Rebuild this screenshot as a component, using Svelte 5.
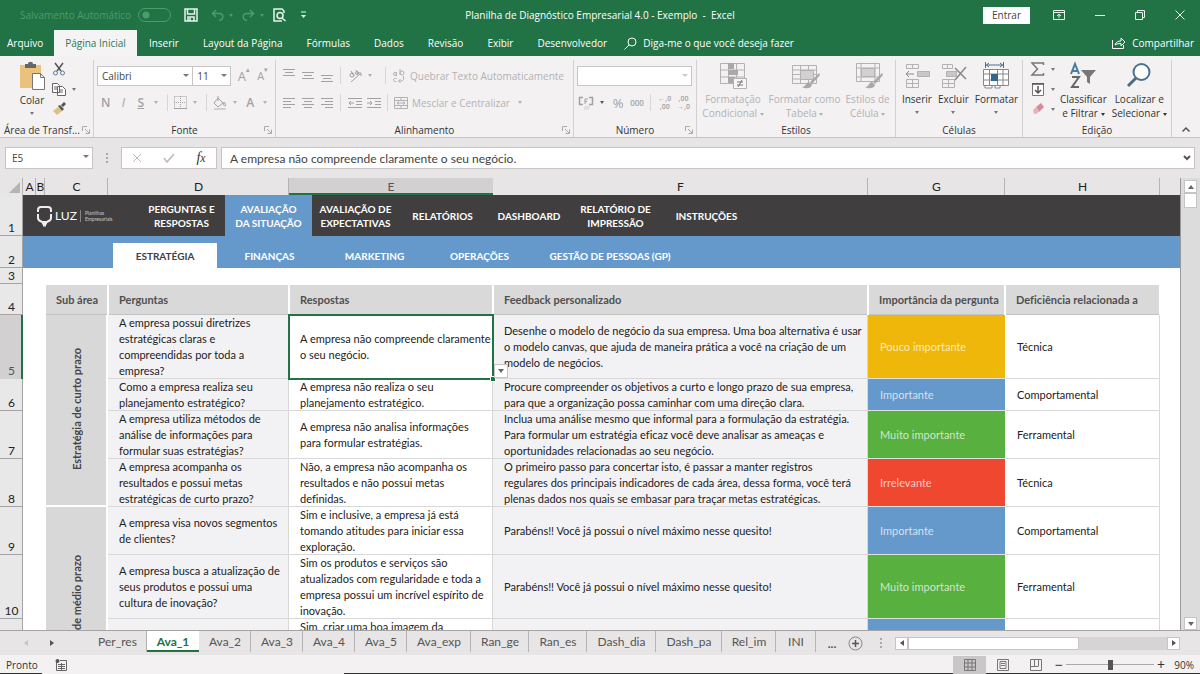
<script lang="ts">
  type Row = {
    n?: number
    height: number
    pergunta: string
    resposta: string
    feedback: string
    nivel: string
    cor: string
    relacao: string
    area?: string
    span?: number
  }

  const menu = ['Inserir', 'Layout da Página', 'Fórmulas', 'Dados', 'Revisão', 'Exibir', 'Desenvolvedor']
  const columns = ['A', 'B', 'C', 'D', 'E', 'F', 'G', 'H', '']
  const secoes = [
    'PERGUNTAS E\nRESPOSTAS',
    'AVALIAÇÃO\nDA SITUAÇÃO',
    'AVALIAÇÃO DE\nEXPECTATIVAS',
    'RELATÓRIOS',
    'DASHBOARD',
    'RELATÓRIO DE\nIMPRESSÃO',
    'INSTRUÇÕES',
  ]
  const areas = ['ESTRATÉGIA', 'FINANÇAS', 'MARKETING', 'OPERAÇÕES', 'GESTÃO DE PESSOAS (GP)']
  const headers = ['Sub área', 'Perguntas', 'Respostas', 'Feedback personalizado', 'Importância da pergunta', 'Deficiência relacionada a']
  const sheets = ['Per_res', 'Ava_1', 'Ava_2', 'Ava_3', 'Ava_4', 'Ava_5', 'Ava_exp', 'Ran_ge', 'Ran_es', 'Dash_dia', 'Dash_pa', 'Rel_im', 'INI']

  const rows: Row[] = [
    {
      n: 5, height: 64, area: 'Estratégia de curto prazo', span: 4,
      pergunta: 'A empresa possui diretrizes\nestratégicas claras e\ncompreendidas por toda a\nempresa?',
      resposta: 'A empresa não compreende claramente\no seu negócio.',
      feedback: 'Desenhe o modelo de negócio da sua empresa. Uma boa alternativa é usar\no modelo canvas, que ajuda de maneira prática a você na criação de um\nmodelo de negócios.',
      nivel: 'Pouco importante', cor: 'yellow', relacao: 'Técnica',
    },
    {
      n: 6, height: 32,
      pergunta: 'Como a empresa realiza seu\nplanejamento estratégico?',
      resposta: 'A empresa não realiza o seu\nplanejamento estratégico.',
      feedback: 'Procure compreender os objetivos a curto e longo prazo de sua empresa,\npara que a organização possa caminhar com uma direção clara.',
      nivel: 'Importante', cor: 'blue', relacao: 'Comportamental',
    },
    {
      n: 7, height: 48,
      pergunta: 'A empresa utiliza métodos de\nanálise de informações para\nformular suas estratégias?',
      resposta: 'A empresa não analisa informações\npara formular estratégias.',
      feedback: 'Inclua uma análise mesmo que informal para a formulação da estratégia.\nPara formular um estratégia eficaz você deve analisar as ameaças e\noportunidades relacionadas ao seu negócio.',
      nivel: 'Muito importante', cor: 'green', relacao: 'Ferramental',
    },
    {
      n: 8, height: 48,
      pergunta: 'A empresa acompanha os\nresultados e possui metas\nestratégicas de curto prazo?',
      resposta: 'Não, a empresa não acompanha os\nresultados e não possui metas\ndefinidas.',
      feedback: 'O primeiro passo para concertar isto, é passar a manter registros\nregulares dos principais indicadores de cada área, dessa forma, você terá\nplenas dados nos quais se embasar para traçar metas estratégicas.',
      nivel: 'Irrelevante', cor: 'red', relacao: 'Técnica',
    },
    {
      n: 9, height: 48, area: 'Estratégia de médio prazo', span: 4,
      pergunta: 'A empresa visa novos segmentos\nde clientes?',
      resposta: 'Sim e inclusive, a empresa já está\ntomando atitudes para iniciar essa\nexploração.',
      feedback: 'Parabéns!! Você já possui o nível máximo nesse quesito!',
      nivel: 'Importante', cor: 'blue', relacao: 'Comportamental',
    },
    {
      n: 10, height: 64,
      pergunta: 'A empresa busca a atualização de\nseus produtos e possui uma\ncultura de inovação?',
      resposta: 'Sim os produtos e serviços são\natualizados com regularidade e toda a\nempresa possui um incrível espírito de\ninovação.',
      feedback: 'Parabéns!! Você já possui o nível máximo nesse quesito!',
      nivel: 'Muito importante', cor: 'green', relacao: 'Ferramental',
    },
    { height: 48, pergunta: '', resposta: 'Sim, criar uma boa imagem da', feedback: '', nivel: '', cor: 'blue', relacao: '' },
    { height: 66, pergunta: '', resposta: '', feedback: '', nivel: '', cor: 'green', relacao: '' },
  ]

  let section = $state(1)
  let area = $state(0)
  let sheet = $state(1)
  let autosave = $state(false)
  let formula = $state('A empresa não compreende claramente o seu negócio.')
  let zoom = $state(90)
</script>

{#snippet caret()}<i class="caret"></i>{/snippet}

{#snippet launcher()}
  <svg class="launcher" width="8" height="8" viewBox="0 0 8 8"><path d="M.5 5V.5H5M3 3l4 4M7.500 3.500v4h-4" /></svg>
{/snippet}

{#snippet lines(a: string)}
  <svg width="14" height="14" viewBox="0 0 14 14"><path d={a} /></svg>
{/snippet}

{#snippet brush()}
  <path class="fill-g" d="M28 11l-9 9 2 2 8-9zM18 20c-3 0-3 5-7 5 3 2 9 2 10-2z" />
{/snippet}

<div class="excel">
  <header class="title-bar">
    <div class="quick">
      <label class="autosave">
        Salvamento Automático
        <input type="checkbox" bind:checked={autosave} />
      </label>
      <button aria-label="Salvar">
        <svg width="14" height="14" viewBox="0 0 14 14"><path d="M1 1h12v12H1zM3.500 1v5h7V1M4 13V9h6v4M6 10v3" stroke-width="1.500" /></svg>
      </button>
      <button class="faded" aria-label="Desfazer">
        <svg width="13" height="13" viewBox="0 0 13 13"><path d="M5 1L1.500 4.500 5 8M2 4.500h6c5 0 5 6 0 7" stroke-width="1.500" /></svg>{@render caret()}
      </button>
      <button class="faded" aria-label="Refazer">
        <svg width="13" height="13" viewBox="0 0 13 13"><path d="M8 1l3.500 3.500L8 8M11 4.500H5c-5 0-5 6 0 7" stroke-width="1.500" /></svg>{@render caret()}
      </button>
      <button aria-label="Visualizar impressão">
        <svg width="14" height="14" viewBox="0 0 14 14"><path d="M11 5V3L9 1H1v12h8M12.500 13L9 10" stroke-width="1.500" /><circle cx="7" cy="7.500" r="3" stroke-width="1.500" /></svg>
      </button>
      <button aria-label="Personalizar barra">
        <svg width="7" height="8" viewBox="0 0 7 8"><path d="M1 1h5" /><path class="solid" d="M1 4h5L3.500 7z" /></svg>
      </button>
    </div>
    <h1>Planilha de Diagnóstico Empresarial 4.0 - Exemplo&nbsp; -&nbsp; Excel</h1>
    <div class="window">
      <button class="signin">Entrar</button>
      <button aria-label="Opções da faixa"><svg width="12" height="10" viewBox="0 0 12 10"><path d="M.5.500h11v9H.5zM.5 2.500h11M6 8V4M4 6l2-2 2 2" /></svg></button>
      <button aria-label="Minimizar"><svg width="10" height="10" viewBox="0 0 10 10"><path d="M0 5.500h10" /></svg></button>
      <button aria-label="Restaurar"><svg width="10" height="10" viewBox="0 0 10 10"><path d="M.5 2.500h7v7h-7zM2.500 2.500v-2h7v7h-2" /></svg></button>
      <button aria-label="Fechar"><svg width="10" height="10" viewBox="0 0 10 10"><path d="M.5.500l9 9M9.500.500l-9 9" /></svg></button>
    </div>
  </header>

  <nav class="menu">
    <button class="file">Arquivo</button>
    <button class="active">Página Inicial</button>
    {#each menu as item}
      <button>{item}</button>
    {/each}
    <button class="tell">
      <svg width="13" height="13" viewBox="0 0 13 13"><circle cx="8" cy="5" r="4" /><path d="M5 8L.5 12.500" /></svg>
      Diga-me o que você deseja fazer
    </button>
    <button class="share">
      <svg width="14" height="12" viewBox="0 0 14 12"><path d="M.5 3v8.500h11V8M3 8c1-3 3-4 6-4V1l4 4-4 4V6.500C6 6.500 4.500 7 3 8z" /></svg>
      Compartilhar
    </button>
  </nav>

  <section class="ribbon">
    <div class="group">
      <div class="body">
        <button class="big paste">
          <svg width="26" height="28" viewBox="0 0 26 28">
            <path fill="#ebc27c" stroke="none" d="M1 3h21v23H1z" /><path fill="#666" stroke="none" d="M6 2h3c0-3 5-3 5 0h3v4H6z" />
            <path fill="#fff" stroke="#777" d="M13.500 11.500h8l4 4v12h-12zM21.500 11.500v4h4" />
          </svg>
          <span>Colar</span>{@render caret()}
        </button>
        <div class="stack">
          <button aria-label="Recortar">
            <svg width="14" height="14" viewBox="0 0 14 14"><path stroke="#555" stroke-width="1.500" d="M3 1l6 8M11 1L5 9" /><circle cx="3.500" cy="11" r="2" stroke="#5a7ba0" /><circle cx="10.500" cy="11" r="2" stroke="#5a7ba0" /></svg>
          </button>
          <button aria-label="Copiar">
            <svg width="14" height="14" viewBox="0 0 14 14"><path stroke="#666" fill="#fff" d="M.5 1.500h5l2 2v7h-7zM2 5h3M2 7h3M5.500 4.500h5l3 3v6h-8zM7 8h4M7 10h4" /></svg>{@render caret()}
          </button>
          <button aria-label="Pincel de formatação">
            <svg width="14" height="14" viewBox="0 0 14 14"><path fill="#e0c080" stroke="none" d="M1 9l5-4 4 4-5 4z" /><path fill="#555" stroke="none" d="M6 4l2-1 4 4-2 2zM9 3l3-3 2 2-3 3z" /></svg>
          </button>
        </div>
      </div>
      <footer class="start">Área de Transf... {@render launcher()}</footer>
    </div>

    <div class="group">
      <div class="body rows">
        <div class="line">
          <span class="combo font"><select aria-label="Fonte"><option>Calibri</option></select></span>
          <span class="combo size"><select aria-label="Tamanho"><option>11</option></select></span>
          <button class="tool grow-font" aria-label="Aumentar fonte">A<sup>▴</sup></button>
          <button class="tool shrink-font" aria-label="Diminuir fonte">A<sup>▾</sup></button>
        </div>
        <div class="line dim">
          <button class="tool"><b>N</b></button>
          <button class="tool"><em>I</em></button>
          <button class="tool"><b><u>S</u></b></button>
          {@render caret()}
          <hr />
          <button class="tool" aria-label="Bordas"><svg width="13" height="13" viewBox="0 0 13 13"><path stroke-dasharray="1 1" d="M.5.500h12v12M.5.500v12M6.500 0v12M0 6.500h12" /><path d="M0 12.500h13" /></svg></button>
          {@render caret()}
          <hr />
          <button class="tool" aria-label="Cor de preenchimento"><svg width="14" height="14" viewBox="0 0 14 14"><path d="M5 2l5 5-5 4-4-4zM5 5V0M11 6c2 2 2 4 1 4s-2-1-1-4" /><path stroke-width="2" stroke="#d2d0d1" d="M1 13h12" /></svg></button>
          {@render caret()}
          <button class="tool"><b>A</b></button>
          {@render caret()}
        </div>
      </div>
      <footer>Fonte {@render launcher()}</footer>
    </div>

    <div class="group">
      <div class="body rows dim">
        <div class="line">
          <button class="tool" aria-label="Alinhar em cima">{@render lines('M1 .5h12M3 3.500h8M1 6.500h12')}</button>
          <button class="tool" aria-label="Alinhar no meio">{@render lines('M1 3.500h12M3 6.500h8M1 9.500h12')}</button>
          <button class="tool" aria-label="Alinhar embaixo">{@render lines('M1 6.500h12M3 9.500h8M1 12.500h12')}</button>
          <hr />
          <button class="tool" aria-label="Orientação"><svg width="14" height="14" viewBox="0 0 14 14"><path d="M3 13L13 4M10 4h3v3" /><circle cx="4" cy="6" r="2" /><path d="M6 7L3 2M8 1l2 4" /><circle cx="9" cy="4" r="1.500" /></svg></button>
          {@render caret()}
          <hr class="late" />
          <button class="wide">
            <svg width="14" height="14" viewBox="0 0 14 14"><path d="M4.500 3v4M8 0v6M11.500 7v3c0 1.500-1 2-5 2M8.500 10l-2 2 2 2" /><circle cx="3" cy="5" r="1.500" /><circle cx="10" cy="4" r="2" /><path d="M4.500 9.500c-4-1-4 4 0 3" /></svg>
            Quebrar Texto Automaticamente
          </button>
        </div>
        <div class="line">
          <button class="tool" aria-label="Alinhar à esquerda">{@render lines('M1 2.500h12M1 5.500h8M1 8.500h12M1 11.500h8')}</button>
          <button class="tool" aria-label="Centralizar">{@render lines('M1 2.500h12M3 5.500h8M1 8.500h12M3 11.500h8')}</button>
          <button class="tool" aria-label="Alinhar à direita">{@render lines('M1 2.500h12M5 5.500h8M1 8.500h12M5 11.500h8')}</button>
          <hr />
          <button class="tool" aria-label="Diminuir recuo">{@render lines('M0 2.500h14M8 5.500h6M8 8.500h6M0 11.500h14M6 7H1M3 5L1 7l2 2')}</button>
          <button class="tool" aria-label="Aumentar recuo">{@render lines('M0 2.500h14M8 5.500h6M8 8.500h6M0 11.500h14M0 7h5M3 5l2 2-2 2')}</button>
          <hr />
          <button class="wide">
            <svg width="14" height="14" viewBox="0 0 14 14"><path d="M.5 1.500h13v11H.5zM.5 4.500h13M.5 9.500h13M7 1v3M7 10v3M3 7h8M5 5.500L3 7l2 1.500M9 5.500L11 7 9 8.500" /></svg>
            Mesclar e Centralizar
          </button>
          {@render caret()}
        </div>
      </div>
      <footer>Alinhamento {@render launcher()}</footer>
    </div>

    <div class="group">
      <div class="body rows">
        <div class="line">
          <span class="combo number"><select aria-label="Formato de número"><option></option></select></span>
        </div>
        <div class="line dim">
          <button class="tool" aria-label="Moeda"><svg width="15" height="14" viewBox="0 0 15 14"><path d="M4 1.500H.5v7H4M10 1.500h3.500v7H10" stroke-width="1.500" /><path d="M9 3H6v5M6 5.500h2" /><path d="M5 11h6M5 13h5" stroke="#cfcdce" /></svg></button>
          <i class="caret strong"></i>
          <button class="tool percent">%</button>
          <button class="tool zeros"><b>000</b></button>
          <hr />
          <button class="tool decimals">←,0<br />,00</button>
          <button class="tool decimals">,00<br />→,0</button>
        </div>
      </div>
      <footer>Número {@render launcher()}</footer>
    </div>

    <div class="group">
      <div class="body bigs styles dim">
        <button class="big">
          <svg width="28" height="27" viewBox="0 0 28 27"><path d="M1.500 1.500h24v20h-24zM1.500 8h24M1.500 15h24M9.500 1v20M17.500 1v20" /><path class="fill-g" d="M9 1h6v6H9zM9 8h10v5H9zM9 15h7v6H9z" /><path fill="#f8f7f8" d="M14.500 16.500h13v10h-13z" /><path d="M18 20h6M18 23h6M23 18l-4 7" stroke="#777" /></svg>
          <span>Formatação<br />Condicional {@render caret()}</span>
        </button>
        <button class="big">
          <svg width="28" height="27" viewBox="0 0 28 27"><path d="M1.500 3.500h24v18h-24zM1.500 8h24M1.500 12.500h24M1.500 17h24M9.500 3v18M17.500 3v18" /><path fill="#d2d0d1" d="M9.500 8.500h13v9h-13z" />{@render brush()}</svg>
          <span>Formatar como<br />Tabela {@render caret()}</span>
        </button>
        <button class="big">
          <svg width="28" height="27" viewBox="0 0 28 27"><path d="M2.500 1.500h23v18h-23zM2.500 6h23M2.500 15h23M7 1v18M21 1v18" /><path fill="#d2d0d1" d="M7.500 6.500h13v8h-13z" />{@render brush()}</svg>
          <span>Estilos de<br />Célula {@render caret()}</span>
        </button>
      </div>
      <footer>Estilos</footer>
    </div>

    <div class="group">
      <div class="body bigs cells">
        <button class="big">
          <svg width="26" height="27" viewBox="0 0 26 27"><path d="M2.500 2.500h12v4h-12zM8.500 2v4M2.500 17.500h12v8h-12zM8.500 17v8M2.500 21.500h12" /><path fill="#c9c7c8" d="M13.500 9.500h12v5h-12z" /><path stroke="#888" d="M10 12H2M5 9l-3 3 3 3" /></svg>
          <span>Inserir</span>{@render caret()}
        </button>
        <button class="big">
          <svg width="26" height="27" viewBox="0 0 26 27"><path d="M2.500 2.500h10v4h-10zM7.500 2v4M2.500 17.500h12v8h-12zM8.500 17v8M2.500 21.500h12" /><path fill="#c9c7c8" d="M6.500 9.500h10v5h-10z" /><path stroke="#888" stroke-width="1.500" d="M15 6l11 11M26 5L15 18" /></svg>
          <span>Excluir</span>{@render caret()}
        </button>
        <button class="big">
          <svg width="26" height="27" viewBox="0 0 26 27"><path stroke="#4a7191" d="M2.500 0v6M20.500 0v6M3 3h17M6 1L3.500 3 6 5M17 1l2.500 2L17 5" /><path stroke="#888" fill="#fff" d="M.5 7.500h25v16H.5zM.5 12h25M.5 18h25M6.500 7v16M14.500 7v16M20 7v16M2 24v2h7v-2M12 24v2h5v-2" /><path fill="#34658f" stroke="none" d="M8 12h7v7H8z" /></svg>
          <span>Formatar</span>{@render caret()}
        </button>
      </div>
      <footer>Células</footer>
    </div>

    <div class="group">
      <div class="body editing">
        <div class="stack">
          <button aria-label="Soma"><svg width="14" height="14" viewBox="0 0 14 14"><path stroke="#777" stroke-width="1.500" d="M12.500 3V1H1l5.500 6L1 13h11.500v-2" /></svg>{@render caret()}</button>
          <button aria-label="Preencher"><svg width="14" height="14" viewBox="0 0 14 14"><path fill="#fff" stroke="#777" d="M1.500 1.500h11v12h-11z" /><path stroke="#555" stroke-width="1.500" d="M1 2h12M7 4v7M4 8l3 3 3-3" /></svg>{@render caret()}</button>
          <button aria-label="Limpar"><svg width="14" height="14" viewBox="0 0 14 14"><path fill="#d98a9a" stroke="none" d="M5 5l5-4 3 4-5 5z" /><path fill="#e9b3bd" stroke="none" d="M2 8l3-3 3 5-3 2H3z" /></svg>{@render caret()}</button>
        </div>
        <button class="big">
          <svg width="28" height="27" viewBox="0 0 28 27"><path stroke="#4a7ba0" stroke-width="2" d="M2 12L6 2l4 10M3.500 9h5" /><path stroke="#666" stroke-width="2" d="M3 15h7L3 25h7" /><path fill="#777" stroke="none" d="M12 8h15l-6 7v7l-3-2v-5z" /></svg>
          <span>Classificar<br />e Filtrar {@render caret()}</span>
        </button>
        <button class="big">
          <svg width="26" height="27" viewBox="0 0 26 27"><circle cx="15.500" cy="10" r="8" stroke="#4a7191" stroke-width="2" fill="#fff" /><path stroke="#4f6b80" stroke-width="3" d="M10 16l-8 8" /></svg>
          <span>Localizar e<br />Selecionar {@render caret()}</span>
        </button>
      </div>
      <footer>Edição</footer>
    </div>

    <button class="collapse" aria-label="Recolher"><svg width="8" height="5" viewBox="0 0 8 5"><path d="M.5 4.500L4 1l3.500 3.500" stroke="#555" stroke-width="1.500" /></svg></button>
  </section>

  <div class="formula-bar">
    <span class="combo name"><select aria-label="Caixa de nome"><option>E5</option></select></span>
    <i class="grip"></i>
    <div class="fx">
      <button aria-label="Cancelar"><svg width="10" height="10" viewBox="0 0 10 10"><path d="M1 1l8 8M9 1L1 9" stroke="#bbb" /></svg></button>
      <button aria-label="Inserir"><svg width="12" height="10" viewBox="0 0 12 10"><path d="M1 5l3 4 7-8" stroke="#bbb" stroke-width="1.500" /></svg></button>
      <button class="fn">f<small>x</small></button>
    </div>
    <div class="entry">
      <input aria-label="Fórmula" bind:value={formula} />
      <svg width="8" height="6" viewBox="0 0 8 6"><path d="M1 1l3 3 3-3" stroke="#555" stroke-width="2" /></svg>
    </div>
  </div>

  <main class="sheet">
    <div class="grid">
      <table>
        <colgroup>
          <col class="w-head" /><col class="w-a" /><col class="w-b" /><col class="w-c" /><col class="w-d" />
          <col class="w-e" /><col /><col class="w-g" /><col class="w-h" /><col class="w-rest" />
        </colgroup>
        <thead>
          <tr>
            <th class="corner"><svg width="11" height="11" viewBox="0 0 11 11"><path d="M11 0v11H0z" fill="#b5b3b4" stroke="none" /></svg></th>
            {#each columns as c}
              <th class:picked={c === 'E'}>{c}</th>
            {/each}
          </tr>
        </thead>
        <tbody>
          <tr class="r1">
            <th class="num">1</th>
            <td colspan="9" class="dark">
              <nav class="sections">
                <span class="logo">
                  <svg width="15" height="22" viewBox="0 0 15 22"><path d="M1 7V5c0-2 1-3 3-3h7c2 0 3 1 3 3v2M1 9v4c0 3 3 3 4 4h5c1-1 4-1 4-4V9M5 18.500h5M6 20.500h3" stroke="#eee" stroke-width="2" /></svg>
                  <strong>LUZ</strong>
                  <small>Planilhas<br />Empresariais</small>
                </span>
                {#each secoes as s, i}
                  <button class:active={section === i} onclick={() => (section = i)}>{s}</button>
                {/each}
              </nav>
            </td>
          </tr>
          <tr class="r2">
            <th class="num">2</th>
            <td colspan="9" class="blue">
              <nav class="areas">
                {#each areas as a, i}
                  <button class:active={area === i} onclick={() => (area = i)}>{a}</button>
                {/each}
              </nav>
            </td>
          </tr>
          <tr class="r3"><th class="num">3</th><td colspan="9"></td></tr>
          <tr class="r4">
            <th class="num">4</th>
            <td colspan="2"></td>
            {#each headers as h}
              <th class="head">{h}</th>
            {/each}
            <td></td>
          </tr>
          {#each rows as r}
            <tr style:height="{r.height}px">
              <th class="num" class:picked={r.n === 5}>{r.n ?? ''}</th>
              {#if r.span}
                <td colspan="2" rowspan={r.span}></td>
                <td class="area" rowspan={r.span}><span>{r.area}</span></td>
              {/if}
              <td class="cell tint">{r.pergunta}</td>
              <td class="cell" class:top={!r.n}>
                {r.resposta}{#if r.n === 5}<i class="cursor"></i><button class="pick" aria-label="Abrir lista">{@render caret()}</button>{/if}
              </td>
              <td class="cell tint">{r.feedback}</td>
              <td class="cell level {r.cor}">{r.nivel}</td>
              <td class="cell">{r.relacao}</td>
              <td></td>
            </tr>
          {/each}
        </tbody>
      </table>
    </div>
    <div class="vscroll">
      <button aria-label="Rolar para cima"><i class="tri up"></i></button>
      <i class="thumb"></i>
      <button class="end" aria-label="Rolar para baixo"><i class="tri down"></i></button>
    </div>
  </main>

  <div class="tabs">
    <div class="arrows"><i class="tri left off"></i><i class="tri right"></i></div>
    <nav>
      {#each sheets as s, i}
        <button class:active={sheet === i} onclick={() => (sheet = i)}>{s}</button>
      {/each}
    </nav>
    <span class="more">...</span>
    <button class="add" aria-label="Nova planilha"><svg width="15" height="15" viewBox="0 0 15 15"><circle cx="7.500" cy="7.500" r="6.500" stroke="#888" /><path d="M7.500 4v7M4 7.500h7" stroke="#555" stroke-width="1.500" /></svg></button>
    <i class="grip"></i>
    <div class="hscroll">
      <button aria-label="Rolar para a esquerda"><i class="tri left"></i></button>
      <i class="thumb"></i>
      <button class="end" aria-label="Rolar para a direita"><i class="tri right"></i></button>
    </div>
  </div>

  <footer class="status">
    <span>Pronto</span>
    <svg width="12" height="12" viewBox="0 0 12 12"><path stroke="#666" d="M1.500 3v8.500h10v-10H5M3 5.500h7M3 7.500h7M3 9.500h7M6.500 4v7" /><circle cx="2.500" cy="2" r="2" fill="#555" stroke="none" /></svg>
    <div class="views">
      <button class="active" aria-label="Normal"><svg width="12" height="12" viewBox="0 0 12 12"><path d="M.5.500h11v11H.5zM.5 4h11M.5 8h11M4 .5v11M8 .5v11" /></svg></button>
      <button aria-label="Layout da página"><svg width="12" height="12" viewBox="0 0 12 12"><path d="M.5.500h11v11H.5zM3 2.500h6v7H3zM4 4.500h4M4 6.500h4" /></svg></button>
      <button aria-label="Quebra de página"><svg width="12" height="12" viewBox="0 0 12 12"><path d="M.5.500h11v11H.5zM4.500 1v6M8.500 1v6M.5 7.500h8" /></svg></button>
    </div>
    <button class="step">−</button>
    <input type="range" min="10" max="170" aria-label="Zoom" bind:value={zoom} />
    <button class="step">+</button>
    <span class="level-text">{zoom}%</span>
  </footer>
</div>

<style>
  :global(body) { margin: 0; }
  .excel {
    --green: #217346;
    --chrome: #e7e5e6;
    --line: #c6c4c5;
    --ui: "Open Sans", "Noto Sans", sans-serif;
    --calibri: Lato, "Open Sans", sans-serif;
    height: 100vh;
    display: flex;
    flex-direction: column;
    overflow: hidden;
    background: var(--chrome);
    color: #333;
    font: 10px/14px var(--ui);
    font-variant-ligatures: none;
  }
  .excel * { box-sizing: border-box; }
  button {
    border: 0;
    padding: 0;
    margin: 0;
    background: none;
    color: inherit;
    font: inherit;
    display: flex;
    align-items: center;
    justify-content: center;
  }
  svg { fill: none; stroke: currentColor; flex: none; overflow: visible; }
  svg .solid { fill: currentColor; stroke: none; }
  svg .fill-g { fill: #aaa8a9; stroke: none; }
  .caret {
    display: inline-block;
    flex: none;
    border: 2px solid transparent;
    border-top: 3px solid currentColor;
    border-bottom: 0;
    vertical-align: middle;
  }

  /* title bar and menu */
  .title-bar {
    height: 30px;
    flex: none;
    display: grid;
    grid-template-columns: 1fr auto 1fr;
    align-items: center;
    background: var(--green);
    color: #e8f5ec;
  }
  h1 { margin: 0; font: inherit; color: #fff; white-space: nowrap; }
  .quick { display: flex; align-items: center; gap: 13px; padding-left: 20px; }
  .autosave { display: flex; align-items: center; gap: 7px; color: #4f9a6d; white-space: nowrap; }
  .autosave input {
    appearance: none;
    width: 33px;
    height: 14px;
    margin: 0;
    border: 1px solid #4f9a6d;
    border-radius: 7px;
    background: radial-gradient(circle at 7px 6px, #4f9a6d 3px, transparent 4px);
  }
  .quick .faded { color: #4f9a6d; gap: 5px; margin-right: -4px; }
  .window { display: flex; justify-content: flex-end; align-items: center; gap: 30px; padding-right: 15px; }
  .signin { background: #fff; color: #444; width: 47px; height: 17px; margin-right: -7px; }
  .menu { flex: none; height: 26px; display: flex; background: var(--green); color: #fff; }
  .menu button { padding: 0 12px; white-space: nowrap; }
  .menu .file { padding: 0 11px 0 7px; }
  .menu .active { background: #f5f4f5; color: #2d7a50; padding: 0 11px; }
  .menu .tell { gap: 6px; padding: 0 5px; }
  .menu .share { margin-left: auto; padding: 0 6px; gap: 6px; }

  /* ribbon */
  .ribbon {
    flex: none;
    height: 82px;
    display: grid;
    grid-template-columns: 94fr 182fr 298fr 123fr 199fr 127fr 149fr 28fr;
    padding-top: 4px;
    background: #f3f1f2;
    border-bottom: 1px solid var(--line);
  }
  .group { min-width: 0; display: flex; flex-direction: column; border-right: 1px solid #d2d0d1; }
  .group > footer {
    height: 16px;
    position: relative;
    line-height: 18px;
    text-align: center;
    white-space: nowrap;
  }
  .group > .start { text-align: left; padding-left: 4px; }
  .launcher { position: absolute; right: 3px; top: 5px; stroke: #aaa; }
  .body { flex: 1; display: flex; }
  .dim { color: #b3b1b2; }
  .rows { flex-direction: column; padding: 6px 3px 0; gap: 8px; }
  .line { height: 19px; display: flex; align-items: center; }
  .line hr { width: 1px; height: 17px; margin: 0 4px; border: 0; background: #d8d6d7; }
  .line .late { margin-left: 8px; }
  .line .caret { margin: 0 5px 0 4px; }
  .tool { width: 19px; height: 19px; font-size: 12px; color: #a3a1a2; }
  .tool b { font-weight: 600; }
  .tool sup { font-size: 7px; line-height: 7px; align-self: flex-start; }
  .grow-font { margin-left: 4px; font-size: 13px; }
  .shrink-font { font-size: 11px; }
  .wide { gap: 4px; padding-left: 2px; white-space: nowrap; margin-right: 4px; }
  .percent { font-size: 13px; }
  .tool.zeros { font-size: 8px; }
  .tool.decimals { font-size: 7px; line-height: 8px; font-weight: 600; }
  .caret.strong { border-top-color: #555; }
  .combo { position: relative; display: flex; height: 20px; }
  .combo::after {
    content: "";
    position: absolute;
    right: 4px;
    top: 8px;
    border: 3px solid transparent;
    border-top-color: #777;
    border-bottom: 0;
    pointer-events: none;
  }
  .combo.number::after { border-top-color: #ccc; }
  .combo select {
    appearance: none;
    width: 100%;
    padding: 0 4px;
    border: 1px solid var(--line);
    border-radius: 0;
    background: #fff;
    color: #444;
    font: 10px var(--ui);
  }
  .font { width: 98px; }
  .size { width: 39px; margin-left: -1px; }
  .number { width: 115px; }
  .big {
    flex-direction: column;
    justify-content: flex-start;
    padding-top: 2px;
    gap: 3px;
    white-space: nowrap;
  }
  .big > .caret { margin-top: 2px; }
  .paste { width: 52px; padding-left: 12px; }
  .stack { display: flex; flex-direction: column; gap: 6px; padding-top: 2px; }
  .stack button { gap: 6px; justify-content: flex-start; height: 14px; }
  .bigs { justify-content: center; }
  .styles { gap: 5px; }
  .cells { gap: 6px; padding-left: 2px; }
  .cells svg { stroke: #b3b1b2; }
  .cells .caret, .paste .caret, .stack .caret { color: #777; }
  .editing { gap: 5px; padding-left: 8px; }
  .collapse { align-self: end; height: 16px; }

  /* formula bar */
  .formula-bar { flex: none; display: flex; align-items: center; height: 40px; padding: 0 5px; gap: 4px; }
  .formula-bar .name { width: 88px; height: 22px; }
  .name select { padding: 0 6px; }
  .grip { width: 24px; height: 10px; background: radial-gradient(circle, #aaa 1px, transparent 1px) center / 4px 4px repeat-y; }
  .formula-bar .grip { width: 20px; }
  .fx, .entry { display: flex; height: 22px; background: #fff; border: 1px solid var(--line); align-items: center; }
  .fx { width: 96px; justify-content: space-around; }
  .fn { font: italic 14px "Liberation Serif", serif; }
  .entry { flex: 1; padding: 0 3px 0 8px; }
  .entry input { flex: 1; min-width: 0; border: 0; padding: 0; outline: 0; color: #444; background: none; font: 12px var(--calibri); font-variant-ligatures: none; }

  /* sheet */
  .sheet { flex: 1; min-height: 0; display: flex; }
  .grid { flex: 1; overflow: hidden; border-right: 1px solid #999; }
  table { width: 100%; table-layout: fixed; border-spacing: 0; background: #fff; font: 11px/16px var(--calibri); font-variant-ligatures: none; }
  th, td { padding: 0; }
  .w-head { width: 23px; }
  .w-a { width: 13px; }
  .w-b { width: 9px; }
  .w-c { width: 63px; }
  .w-d { width: 181px; }
  .w-e { width: 204px; }
  .w-g { width: 137px; }
  .w-h { width: 155px; }
  .w-rest { width: 20px; }
  thead th {
    height: 17px;
    background: var(--chrome);
    box-shadow: inset -1px 0 #b5b3b4;
    font-weight: 400;
    font-size: 12px;
    color: #222;
  }
  thead .picked { background: #d2d0d1; box-shadow: inset 0 -2px var(--green); color: #555; }
  thead th:last-child { box-shadow: none; }
  .corner { text-align: right; line-height: 0; vertical-align: bottom; }
  .corner svg { margin: 0 3px 2px 0; }
  .num {
    background: #e9e8e9;
    box-shadow: inset -1px -1px #a5a3a4;
    vertical-align: bottom;
    font-weight: 400;
    font-size: 12px;
    color: #222;
  }
  .num.picked { background: #d2d0d1; box-shadow: inset -2px 0 var(--green); color: #555; }
  .r1 { height: 41px; }
  .r2 { height: 32px; }
  .r3 { height: 16px; }
  .r4 { height: 31px; }
  td.dark { background: #403e3f; }
  td.blue { background: #6699cb; }
  .sections, .areas { display: grid; height: 41px; color: #fff; font-size: 10px; }
  .sections { grid-template-columns: 115px repeat(4, 87px) 86px 87px 95px; }
  .sections button, .areas button { font-weight: 700; white-space: pre-line; line-height: 14px; }
  .sections .active { background: #6699cb; }
  .areas { height: 32px; grid-template-columns: 104px repeat(3, 105px) 156px; padding: 7px 0 0 90px; }
  .areas .active { background: #fff; color: #403e3f; }
  .logo { display: flex; align-items: center; gap: 3px; padding-left: 14px; }
  .logo strong { font-size: 12px; font-weight: 400; }
  .logo small { font-size: 5px; line-height: 6px; padding-left: 4px; border-left: 1px solid #888; color: #ccc; }
  .head {
    background: #d9d9d9;
    box-shadow: inset -1px 0 #fff, inset 1px 1px #fff, inset 0 -1px #c2c2c2;
    padding-left: 11px;
    text-align: left;
    color: #505050;
    white-space: nowrap;
  }
  .area {
    background: #d9d8d9;
    box-shadow: inset -2px -2px #fff, inset 1px 0 #fff;
    text-align: center;
    font-weight: 700;
    color: #444;
  }
  .area span { display: inline-block; writing-mode: vertical-rl; transform: rotate(180deg); white-space: nowrap; }
  .cell { position: relative; padding-left: 11px; white-space: pre; color: #222; box-shadow: inset -1px -1px #d9d8d9; }
  .tint { background: #f2f1f3; }
  .top { vertical-align: top; }
  .level { padding-left: 12px; color: #ffffffb8; box-shadow: inset 0 -1px #dde4e0; }
  .level + .cell { padding-left: 12px; }
  .level.yellow { background: #efb709; }
  .level.blue { background: #6699cb; }
  .level.green { background: #58b03f; }
  .level.red { background: #f04731; }
  .cursor { position: absolute; inset: -1px; border: 2px solid var(--green); z-index: 1; }
  .cursor::after {
    content: "";
    position: absolute;
    right: -3px;
    bottom: -3px;
    width: 4px;
    height: 4px;
    background: var(--green);
    outline: 1px solid #fff;
  }
  .pick {
    position: absolute;
    right: -15px;
    bottom: 1px;
    width: 14px;
    height: 14px;
    z-index: 1;
    background: #fff;
    border: 1px solid var(--line);
    color: #666;
  }
  .pick .caret { border-width: 4px 3px 0; }
  .tri { border: 3px solid transparent; }
  .tri.up { border-bottom: 4px solid #666; border-top: 0; }
  .tri.down { border-top: 4px solid #666; border-bottom: 0; }
  .tri.left { border-right: 4px solid #555; border-left: 0; }
  .tri.right { border-left: 4px solid #555; border-right: 0; }
  .tri.off { border-right-color: #c6c4c5; }
  .vscroll { width: 19px; display: flex; flex-direction: column; align-items: center; padding-top: 2px; background: #dddcdd; }
  .vscroll button, .hscroll button, .thumb { width: 13px; height: 13px; background: #fff; border: 1px solid var(--line); }
  .vscroll .thumb { height: 15px; }
  .end { margin-top: auto; }

  /* sheet tabs and status bar */
  .tabs { flex: none; height: 25px; display: flex; align-items: center; border-top: 1px solid #a5a3a4; font: 12px var(--calibri); color: #555; }
  .arrows { width: 88px; display: flex; gap: 22px; padding-left: 24px; }
  .tabs nav { display: grid; grid-template-columns: 59px repeat(5, 52px) 64px 58px 58px 69px 66px 54px 40px; align-self: stretch; }
  .tabs nav button { margin-bottom: 3px; box-shadow: inset -1px 0 #b5b3b4; }
  .tabs nav .active { background: #fff; color: var(--green); font-weight: 700; box-shadow: inset 0 -2px var(--green); }
  .more { width: 32px; text-align: center; font-weight: 700; }
  .tabs .grip { margin-left: 6px; }
  .hscroll { display: flex; flex: 1; margin: 0 20px 0 2px; background: #d6d4d5; }
  .hscroll .thumb { width: 171px; }
  .hscroll .end { margin: 0 0 0 auto; }
  .status {
    flex: none;
    height: 19px;
    display: flex;
    align-items: center;
    padding: 0 6px;
    background: linear-gradient(90deg, #333 42px, #f3f1f2 42px 344px, #333 344px) bottom / 100% 1px no-repeat, #f3f1f2;
  }
  .status > svg { margin-left: 17px; }
  .views { margin-left: auto; display: flex; color: #777; }
  .views button { width: 33px; height: 18px; }
  .views .active { background: #c9c7c8; }
  .step { width: 14px; font-size: 14px; }
  .status input { appearance: none; width: 88px; height: 14px; margin: 0; background: linear-gradient(#aaa, #aaa) center / 100% 1px no-repeat; }
  .status input::-webkit-slider-thumb { appearance: none; width: 5px; height: 10px; background: #555; }
  .level-text { width: 26px; text-align: right; }
</style>
